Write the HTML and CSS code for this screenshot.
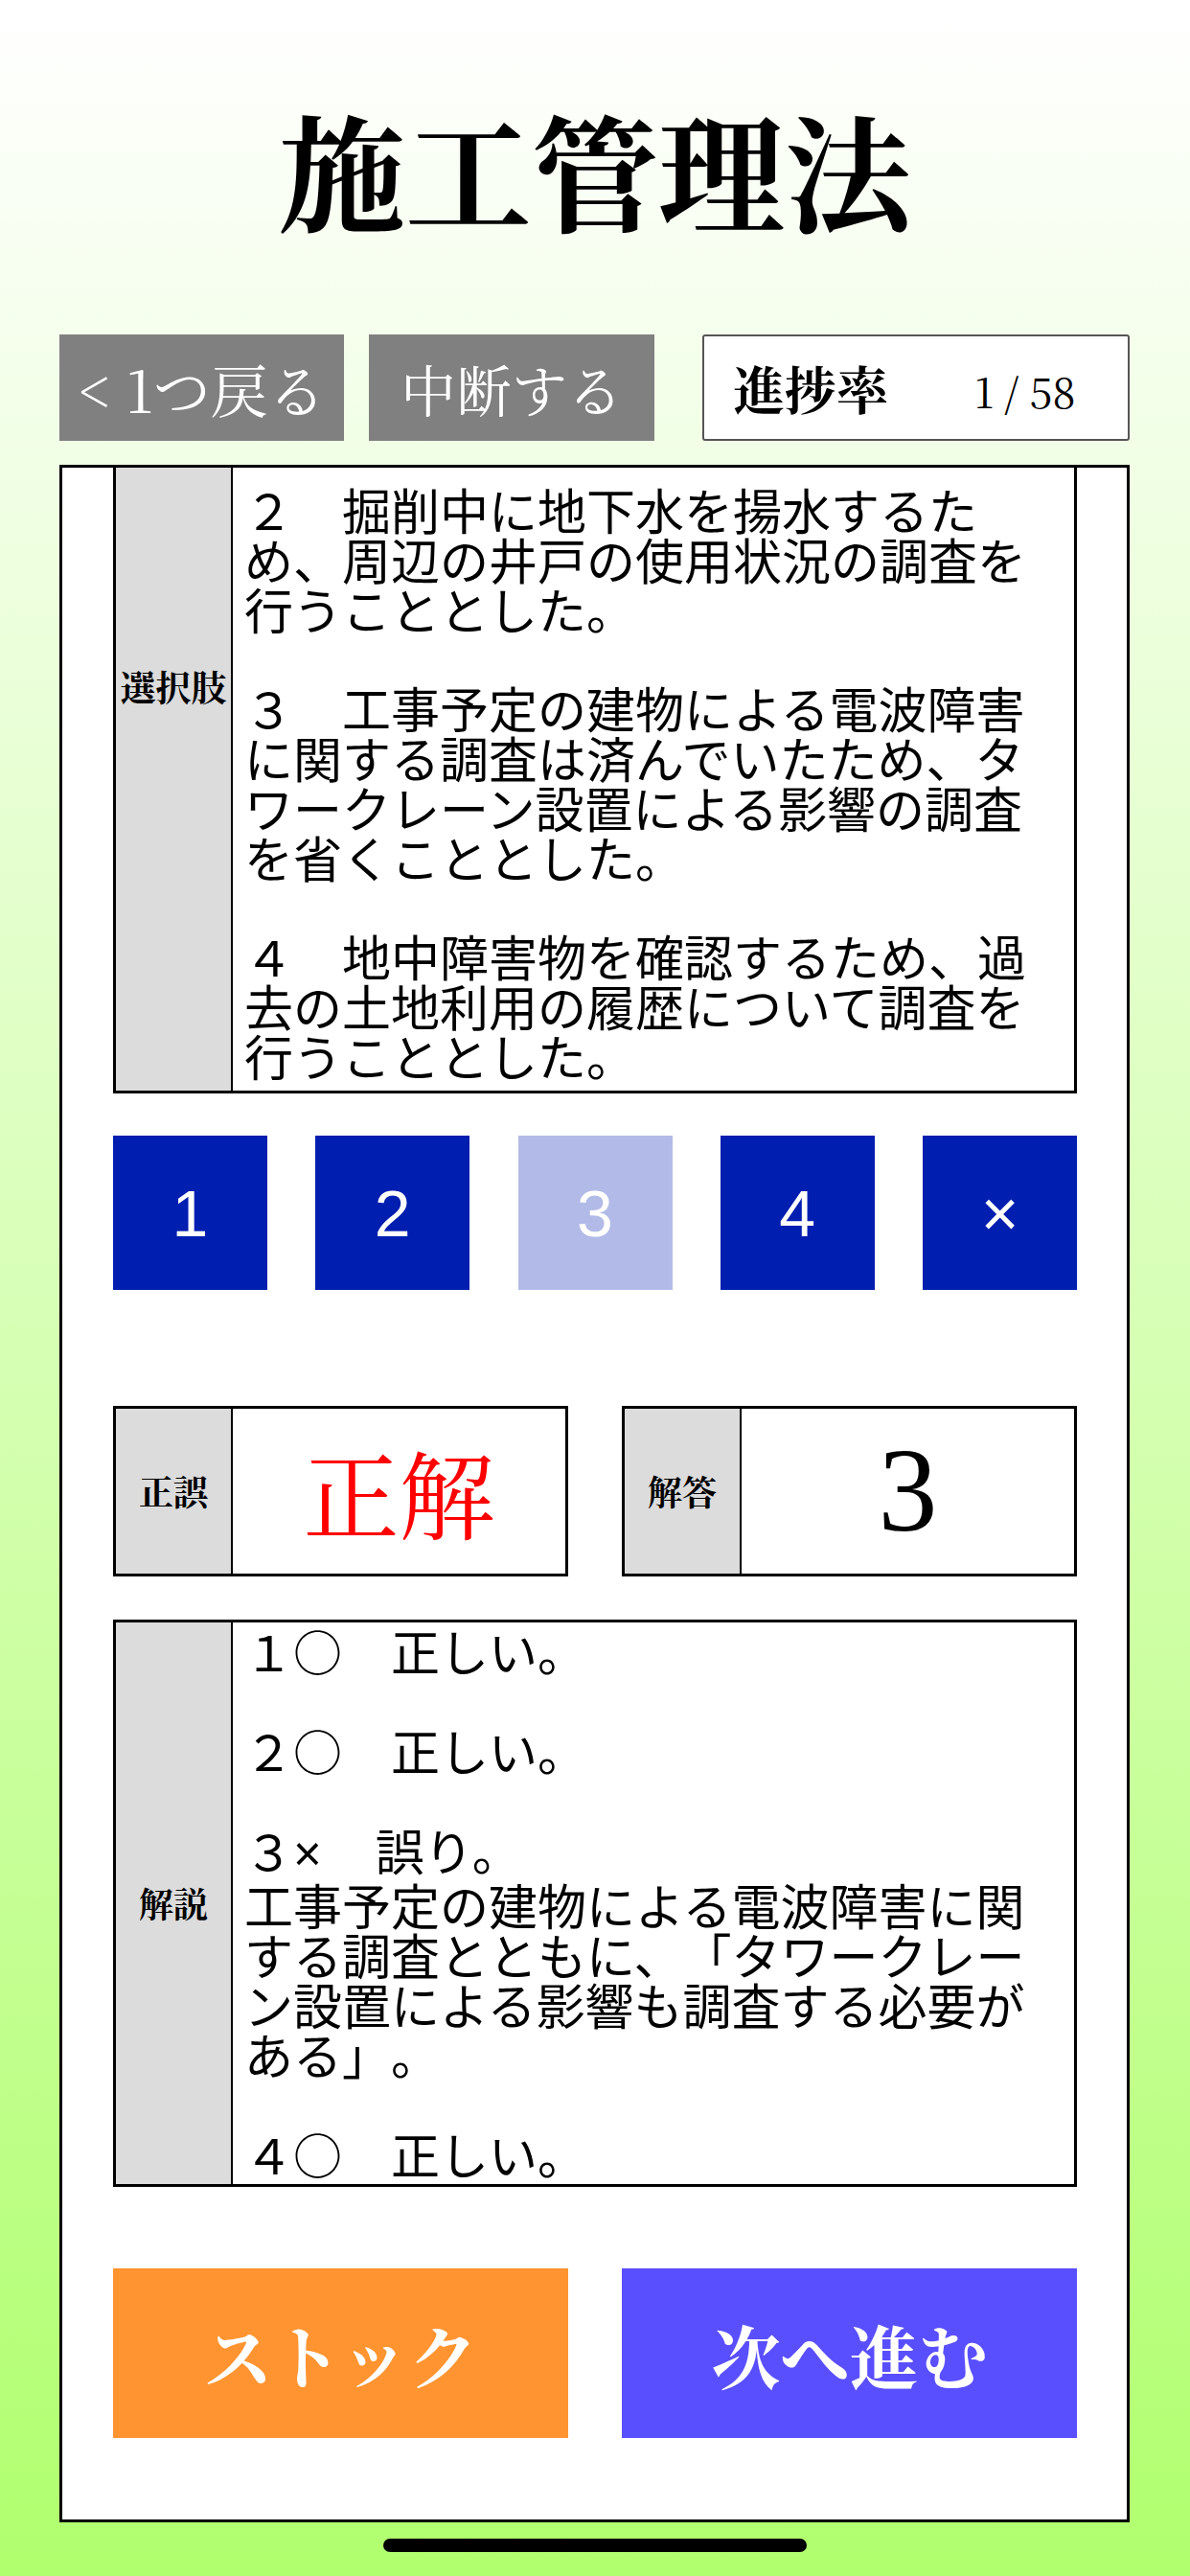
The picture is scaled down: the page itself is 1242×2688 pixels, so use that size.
FILE: index.html
```html
<!DOCTYPE html>
<html lang="ja">
<head>
<meta charset="utf-8">
<title>施工管理法</title>
<link rel="stylesheet" href="styles.css">
</head>
<body>
<div class="screen">
  <header class="header"><h1 class="title">施工管理法</h1></header>
  <div class="toolbar">
    <div class="btn-gray btn-back">&lt; 1つ戻る</div>
    <div class="btn-gray btn-pause">中断する</div>
    <div class="progress"><span class="progress-label">進捗率</span><span class="progress-count">1 / 58</span></div>
  </div>
  <main class="card">
    <section class="table choices">
      <div class="label label-top">選択肢</div>
      <div class="cell text">
        <p class="para">２　掘削中に地下水を揚水するた<br>め、周辺の井戸の使用状況の調査を<br>行うこととした。</p>
        <p class="para">３　工事予定の建物による電波障害<br>に関する調査は済んでいたため、タ<br>ワークレーン設置による影響の調査<br>を省くこととした。</p>
        <p class="para">４　地中障害物を確認するため、過<br>去の土地利用の履歴について調査を<br>行うこととした。</p>
      </div>
    </section>
    <div class="answers">
      <div class="ans">1</div>
      <div class="ans">2</div>
      <div class="ans selected">3</div>
      <div class="ans">4</div>
      <div class="ans">×</div>
    </div>
    <div class="results">
      <div class="table result"><div class="label">正誤</div><div class="cell verdict">正解</div></div>
      <div class="table result"><div class="label">解答</div><div class="cell answer">3</div></div>
    </div>
    <section class="table explain">
      <div class="label">解説</div>
      <div class="cell text">
        <p class="para">１○　正しい。</p>
        <p class="para">２○　正しい。</p>
        <p class="para">３<span class="cross">×</span>　誤り。<br>工事予定の建物による電波障害に関<br>する調査とともに、「タワークレー<br>ン設置による影響も調査する必要が<br>ある」。</p>
        <p class="para">４○　正しい。</p>
      </div>
    </section>
    <div class="actions">
      <div class="action stock">ストック</div>
      <div class="action next">次へ進む</div>
    </div>
  </main>
  <div class="home-indicator"></div>
</div>
</body>
</html>
```

FILE: styles.css
```css
html, body {
  margin: 0;
  padding: 0;
}
body {
  width: 1242px;
  height: 2688px;
  overflow: hidden;
  background: linear-gradient(to bottom, #ffffff 0%, #b0ff6e 100%);
  font-family: "Noto Sans CJK JP", "Noto Sans", sans-serif;
  color: #000;
}
.screen {
  width: 1242px;
  height: 2688px;
}
.header {
  height: 349px;
  display: flex;
  align-items: center;
  justify-content: center;
}
.title {
  margin: 0;
  font-family: "Noto Serif CJK JP", "Noto Serif JP", "Liberation Serif", "Noto Sans CJK JP", serif;
  font-size: 132px;
  font-weight: 700;
  line-height: 1;
}
.toolbar {
  height: 111px;
  display: flex;
  padding: 0 63px 0 62px;
}
.btn-gray {
  background: #808080;
  color: #fff;
  display: flex;
  align-items: center;
  justify-content: center;
  font-family: "Noto Serif CJK JP", "Noto Serif JP", "Liberation Serif", "Noto Sans CJK JP", serif;
  font-size: 58px;
  font-weight: 400;
}
.btn-back {
  width: 297px;
  font-size: 60px;
}
.btn-pause {
  width: 298px;
  margin-left: 26px;
}
.progress {
  width: 446px;
  margin-left: 50px;
  box-sizing: border-box;
  background: #fff;
  border: 2px solid #555;
  border-radius: 3px;
  display: flex;
  align-items: center;
  padding-left: 30px;
  font-family: "Noto Serif CJK JP", "Noto Serif JP", "Liberation Serif", "Noto Sans CJK JP", serif;
}
.progress-label {
  font-size: 54px;
  font-weight: 700;
}
.progress-count {
  margin-left: 90px;
  font-size: 43px;
  margin-top: 6px;
}
.card {
  margin: 25px 63px 0 62px;
  height: 2147px;
  box-sizing: border-box;
  border: 3px solid #000;
  background: #fff;
  padding: 0 52px 0 53px;
  display: flex;
  flex-direction: column;
}
.table {
  display: flex;
  box-sizing: border-box;
  border: 3px solid #000;
  background: #fff;
}
.label {
  width: 122px;
  flex: none;
  box-sizing: border-box;
  border-right: 2px solid #000;
  background: #dcdcdc;
  display: flex;
  align-items: center;
  justify-content: center;
  font-family: "Noto Serif CJK JP", "Noto Serif JP", "Liberation Serif", "Noto Sans CJK JP", serif;
  font-size: 36px;
  font-weight: 700;
  line-height: 40px;
}
.cell {
  flex: 1;
  min-width: 0;
}
.text {
  font-size: 51px;
  line-height: 51.8px;
  padding: 0 16px 0 12px;
  text-spacing-trim: space-all;
}
.para {
  margin: 0 0 51.8px 0;
}
.para:last-child {
  margin-bottom: 0;
}
.cross {
  font-family: "Liberation Sans", sans-serif;
  margin-right: 5px;
}
.choices {
  height: 653px;
  border-top: none;
}
.choices .label {
  align-items: flex-start;
  padding-top: 208px;
  font-size: 37px;
}
.choices .text {
  padding-top: 18px;
}
.answers {
  margin-top: 44px;
  height: 161px;
  display: flex;
  justify-content: space-between;
}
.ans {
  width: 161px;
  background: #001eaf;
  color: #fff;
  display: flex;
  align-items: center;
  justify-content: center;
  font-family: "Liberation Sans", "Noto Sans", sans-serif;
  font-size: 68px;
}
.ans.selected {
  background: rgba(0, 30, 175, 0.3);
}
.results {
  margin-top: 121px;
  height: 178px;
  display: flex;
  justify-content: space-between;
}
.result {
  width: 475px;
}
.verdict {
  display: flex;
  align-items: center;
  justify-content: center;
  color: #ff0000;
  font-family: "Noto Serif CJK JP", "Noto Serif JP", "Liberation Serif", "Noto Sans CJK JP", serif;
  font-size: 100px;
  font-weight: 400;
}
.answer {
  display: flex;
  align-items: center;
  justify-content: center;
  font-family: "Liberation Serif", serif;
  font-size: 124px;
}
.explain {
  margin-top: 45px;
  height: 592px;
}
.explain .text {
  line-height: 52px;
  padding-top: 3px;
}
.explain .para {
  margin-bottom: 52px;
}
.explain .para:last-child {
  margin-bottom: 0;
}
.actions {
  margin-top: 85px;
  height: 177px;
  display: flex;
  justify-content: space-between;
}
.action {
  width: 475px;
  color: #fff;
  display: flex;
  align-items: center;
  justify-content: center;
  font-family: "Noto Serif CJK JP", "Noto Serif JP", "Liberation Serif", "Noto Sans CJK JP", serif;
  font-size: 72px;
  font-weight: 700;
}
.stock {
  background: #ff9430;
}
.next {
  background: #5a4fff;
}
.home-indicator {
  width: 442px;
  height: 14px;
  margin: 17px auto 0;
  background: #000;
  border-radius: 7px;
}
```
